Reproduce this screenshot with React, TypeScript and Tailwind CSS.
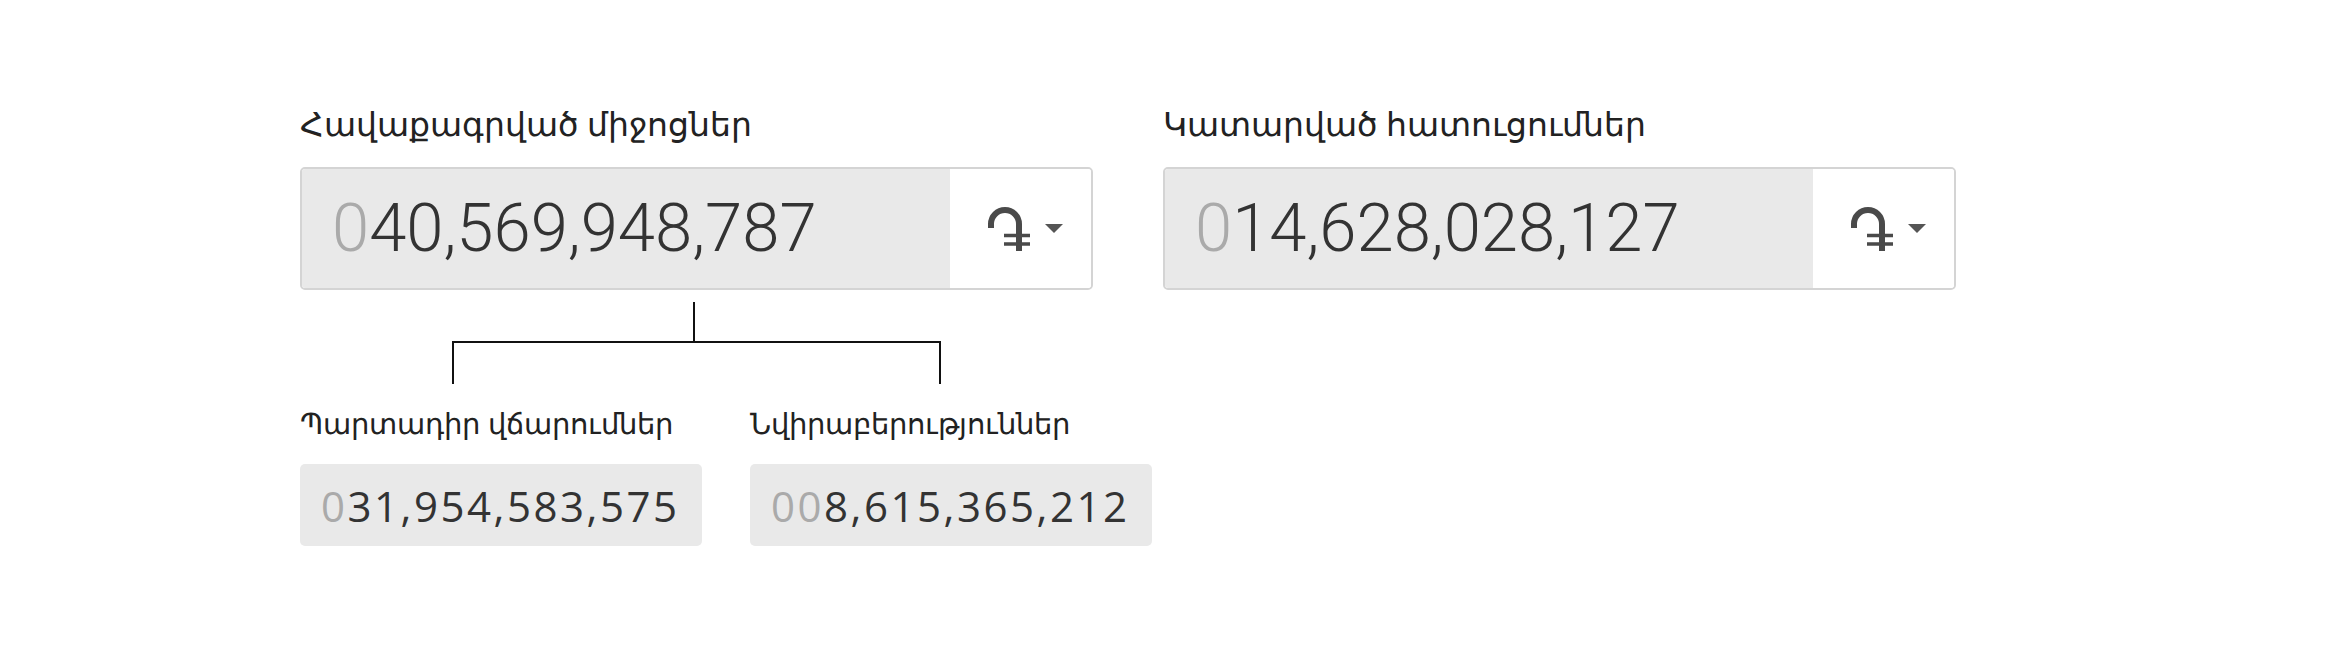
import React from 'react';

function DramIcon() {
  return (
    <svg width="50" height="50" viewBox="0 0 50 50" className="block">
      <path d="M8 24 V20 A14 14 0 0 1 36 20 V47" fill="none" stroke="#4a4a4a" strokeWidth="6" />
      <path d="M21 31.5 H47 M21 40 H47" stroke="#4a4a4a" strokeWidth="3.4" />
    </svg>
  );
}

function Caret() {
  return (
    <svg width="18" height="9" viewBox="0 0 18 9" className="block">
      <path d="M0 0 H18 L9 9 Z" fill="#555" />
    </svg>
  );
}

function Amount({ zeros, value }: { zeros: string; value: string }) {
  return (
    <span>
      <span className="text-[#aaaaaa]">{zeros}</span>
      <span className="text-[#333333]">{value}</span>
    </span>
  );
}

function BigField({ label, zeros, value }: { label: string; zeros: string; value: string }) {
  return (
    <div className="w-[793px] shrink-0">
      <div className="h-[63px] font-['Noto_Sans',sans-serif] text-[32.5px] leading-[40px] text-[#222]">{label}</div>
      <div className="flex h-[123px] overflow-hidden rounded-[5px] border-2 border-[#d4d4d4]">
        <div className="flex flex-1 items-center bg-[#e9e9e9] pl-[30px] font-['Roboto',sans-serif] text-[67px] font-light">
          <Amount zeros={zeros} value={value} />
        </div>
        <div className="flex w-[141px] items-center justify-center gap-[12px] bg-white pl-[4px]">
          <DramIcon />
          <Caret />
        </div>
      </div>
    </div>
  );
}

function SmallField({ label, zeros, value }: { label: string; zeros: string; value: string }) {
  return (
    <div className="flex shrink-0 flex-col">
      <div className="h-[61px] font-['Noto_Sans',sans-serif] text-[29px] leading-[40px] text-[#222]">{label}</div>
      <div className="flex h-[82px] w-[402px] items-center rounded-[5px] bg-[#e9e9e9] pl-[21px] font-['Open_Sans',sans-serif] text-[42px] tracking-[0.06em]">
        <Amount zeros={zeros} value={value} />
      </div>
    </div>
  );
}

export default function App() {
  return (
    <div className="h-[646px] w-[2328px] bg-white">
      <div className="flex gap-[70px] pl-[300px] pt-[104px]">
        <div className="flex w-[793px] shrink-0 flex-col">
          <BigField label="Հավաքագրված միջոցներ" zeros="0" value="40,569,948,787" />
          <svg width="793" height="94" viewBox="0 0 793 94" className="block">
            <path d="M394 12 V52 M153 52 H640 M153 51 V94 M640 51 V94" fill="none" stroke="#111" strokeWidth="2" />
          </svg>
          <div className="mt-[19px] flex gap-[48px]">
            <SmallField label="Պարտադիր վճարումներ" zeros="0" value="31,954,583,575" />
            <SmallField label="Նվիրաբերություններ" zeros="00" value="8,615,365,212" />
          </div>
        </div>
        <BigField label="Կատարված հատուցումներ" zeros="0" value="14,628,028,127" />
      </div>
    </div>
  );
}
